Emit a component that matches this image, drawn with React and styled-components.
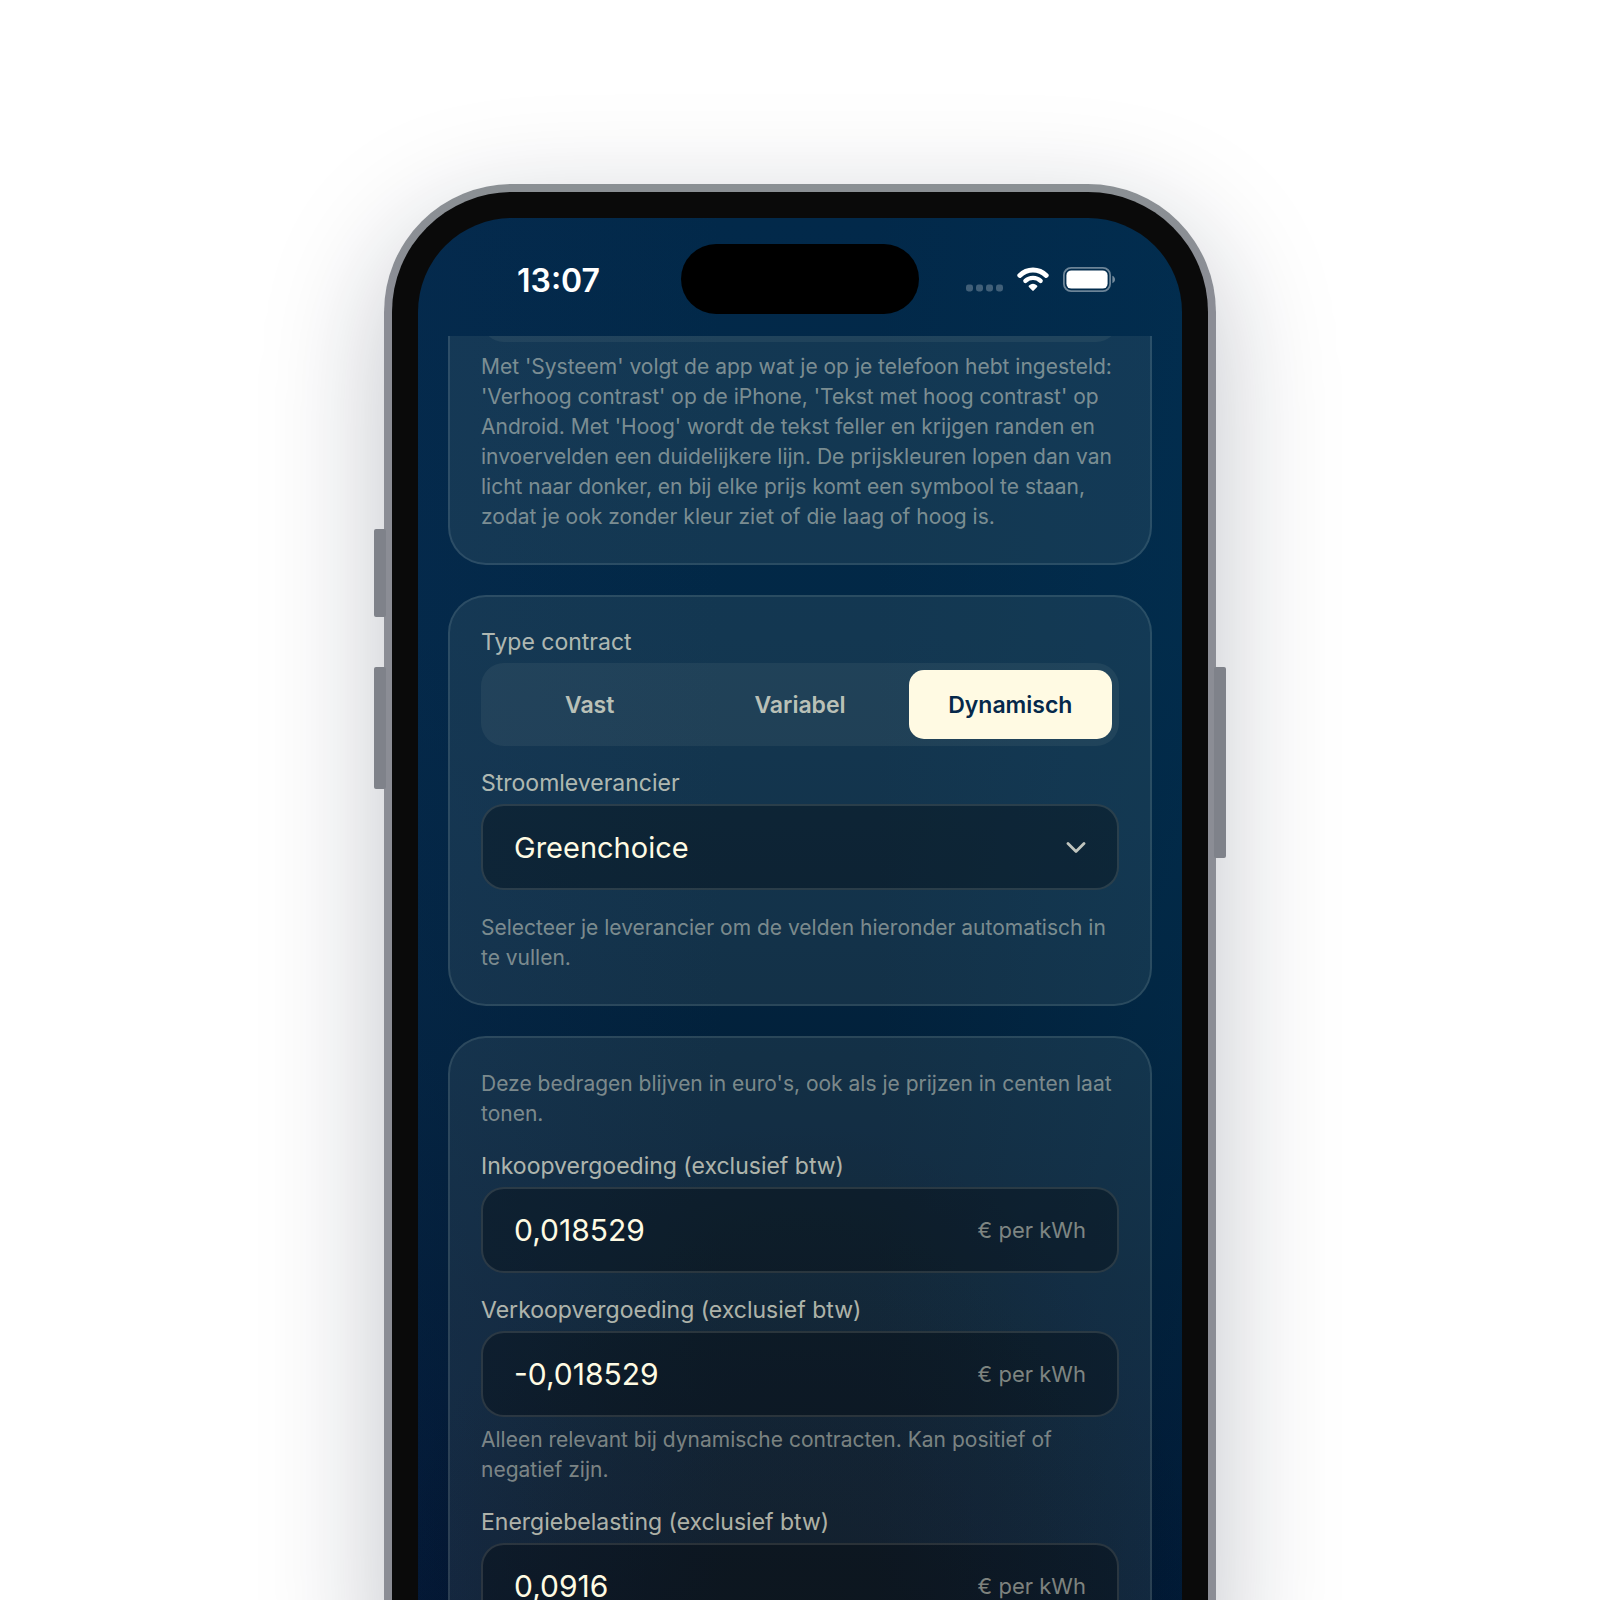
import { useState } from 'react';
import styled, { createGlobalStyle } from 'styled-components';

const contractTypes = ['Vast', 'Variabel', 'Dynamisch'];

export default function App() {
  const [contract, setContract] = useState('Dynamisch');

  return (
    <Page>
      <GlobalStyle />
      <Phone>
        <SideButton $side="left" $top={345} $height={88} />
        <SideButton $side="left" $top={483} $height={122} />
        <SideButton $side="right" $top={483} $height={191} />
        <Bezel>
          <Screen>
            <StatusBar />
            <Settings>
              <Card $clipped>
                <SegmentTail />
                <Hint>
                  Met 'Systeem' volgt de app wat je op je telefoon hebt ingesteld: 'Verhoog contrast' op de iPhone,
                  'Tekst met hoog contrast' op Android. Met 'Hoog' wordt de tekst feller en krijgen randen en
                  invoervelden een duidelijkere lijn. De prijskleuren lopen dan van licht naar donker, en bij elke
                  prijs komt een symbool te staan, zodat je ook zonder kleur ziet of die laag of hoog is.
                </Hint>
              </Card>

              <Card>
                <Field>
                  <Label as="span" id="contract-label">
                    Type contract
                  </Label>
                  <Segments role="group" aria-labelledby="contract-label">
                    {contractTypes.map((type) => (
                      <Segment
                        key={type}
                        type="button"
                        $active={type === contract}
                        aria-pressed={type === contract}
                        onClick={() => setContract(type)}
                      >
                        {type}
                      </Segment>
                    ))}
                  </Segments>
                </Field>
                <Field>
                  <Label htmlFor="supplier">Stroomleverancier</Label>
                  <Control>
                    <Select id="supplier" defaultValue="Greenchoice">
                      <option>Greenchoice</option>
                    </Select>
                    <Chevron />
                  </Control>
                </Field>
                <Hint>Selecteer je leverancier om de velden hieronder automatisch in te vullen.</Hint>
              </Card>

              <Card>
                <Hint>Deze bedragen blijven in euro's, ook als je prijzen in centen laat tonen.</Hint>
                <PriceField id="purchase" label="Inkoopvergoeding (exclusief btw)" value="0,018529" />
                <PriceField
                  id="sale"
                  label="Verkoopvergoeding (exclusief btw)"
                  value="-0,018529"
                  hint="Alleen relevant bij dynamische contracten. Kan positief of negatief zijn."
                />
                <PriceField id="tax" label="Energiebelasting (exclusief btw)" value="0,0916" />
              </Card>
            </Settings>
          </Screen>
        </Bezel>
      </Phone>
    </Page>
  );
}

function PriceField({ id, label, value, hint }) {
  return (
    <Field>
      <Label htmlFor={id}>{label}</Label>
      <Control>
        <Input id={id} type="text" inputMode="decimal" defaultValue={value} />
        <Unit>€ per kWh</Unit>
      </Control>
      {hint && <Hint>{hint}</Hint>}
    </Field>
  );
}

function StatusBar() {
  return (
    <Bar>
      <Time>13:07</Time>
      <Island />
      <Indicators>
        <svg width="37" height="25" viewBox="0 0 37 25" fill="#fff" fillOpacity="0.25">
          <rect x="0" y="17.5" width="7" height="7" rx="2.4" />
          <rect x="10" y="17.5" width="7" height="7" rx="2.4" />
          <rect x="20" y="17.5" width="7" height="7" rx="2.4" />
          <rect x="30" y="17.5" width="7" height="7" rx="2.4" />
        </svg>
        <svg width="32" height="25" viewBox="0 0 32 25" fill="none" stroke="#fff" strokeLinecap="round">
          <path d="M2.8 8.4A18.8 18.8 0 0 1 29.2 8.4" strokeWidth="4.9" />
          <path d="M8.4 13.9A11 11 0 0 1 23.6 13.9" strokeWidth="4.4" />
          <path
            d="M12.6 19.2Q16 16.6 19.4 19.2L16 22.8Z"
            fill="#fff"
            strokeWidth="2"
            strokeLinejoin="round"
          />
        </svg>
        <svg width="52" height="25" viewBox="0 0 52 25">
          <rect x="0.9" y="0.9" width="46.2" height="23.2" rx="7.2" fill="none" stroke="#fff" strokeOpacity="0.42" strokeWidth="1.8" />
          <rect x="3.4" y="3.4" width="41.2" height="18.2" rx="5" fill="#fff" />
          <path d="M49.4 8.8C50.9 9.4 52 10.8 52 12.5S50.9 15.6 49.4 16.2Z" fill="#fff" fillOpacity="0.45" />
        </svg>
      </Indicators>
    </Bar>
  );
}

function Chevron() {
  return (
    <svg width="20" height="12" viewBox="0 0 20 12" fill="none" aria-hidden="true">
      <path d="M2 2.4L10 10.4L18 2.4" stroke="#c0c5be" strokeWidth="2.8" strokeLinecap="round" strokeLinejoin="round" />
    </svg>
  );
}

const GlobalStyle = createGlobalStyle`
  * {
    box-sizing: border-box;
  }

  body {
    margin: 0;
    background: #fff;
    font-family: Inter, 'Liberation Sans', sans-serif;
  }

  button,
  input,
  select {
    font-family: inherit;
  }
`;

const Page = styled.main`
  display: flex;
  justify-content: center;
  align-items: flex-start;
  height: 100vh;
  padding: 184px 16px 0;
  overflow: hidden;
`;

const Phone = styled.div`
  position: relative;
  width: 100%;
  max-width: 832px;
  padding: 8px;
  border-radius: 128px;
  background: linear-gradient(#8b9094, #8b8d95 120px);
  box-shadow: 0 36px 120px rgba(15, 25, 45, 0.26);
`;

const SideButton = styled.span`
  position: absolute;
  ${(props) => props.$side}: -10px;
  top: ${(props) => props.$top}px;
  width: 12px;
  height: ${(props) => props.$height}px;
  border-radius: 2px;
  background: #7f828a;
`;

const Bezel = styled.div`
  padding: 26px;
  border-radius: 120px;
  background: #0a0a0a;
`;

const Screen = styled.div`
  border-radius: 94px;
  overflow: hidden;
  background: radial-gradient(ellipse 420px 600px at 50% 1500px, rgba(3, 16, 22, 0.6), transparent),
    linear-gradient(90deg, rgba(10, 44, 84, 0.3), transparent 40%, transparent 60%, rgba(0, 56, 92, 0.25)),
    linear-gradient(#02294a, #022846 420px, #02213b 840px, #021a32 1060px, #01102a 1400px);
`;

const Bar = styled.div`
  display: grid;
  grid-template-columns: 1fr 238px 1fr;
  align-items: center;
  padding: 26px 0 22px;
`;

const Time = styled.div`
  padding: 3px 0 0 18px;
  font-size: 32px;
  font-weight: 600;
  line-height: 40px;
  text-align: center;
  color: #fff;
`;

const Island = styled.div`
  height: 70px;
  border-radius: 35px;
  background: #000;
`;

const Indicators = styled.div`
  display: flex;
  justify-content: center;
  align-items: center;
  gap: 14px;
  padding-right: 20px;
`;

const Settings = styled.div`
  display: flex;
  flex-direction: column;
  gap: 30px;
  padding: 0 30px 30px;
  overflow: hidden;
`;

const Card = styled.section`
  display: flex;
  flex-direction: column;
  gap: ${(props) => (props.$clipped ? 10 : 23)}px;
  padding: ${(props) => (props.$clipped ? '0 31px 31px' : '31px')};
  border: 2px solid rgba(200, 225, 220, 0.13);
  border-top-width: ${(props) => (props.$clipped ? 0 : 2)}px;
  border-radius: ${(props) => (props.$clipped ? '0 0 38px 38px' : '38px')};
  background: rgba(255, 250, 225, 0.07);
`;

const Field = styled.div`
  display: flex;
  flex-direction: column;
  gap: 6px;
`;

const Label = styled.label`
  font-size: 23px;
  line-height: 29px;
  color: rgba(255, 251, 227, 0.68);
`;

const Hint = styled.p`
  margin: 0;
  font-size: 21px;
  line-height: 30px;
  color: rgba(255, 251, 227, 0.45);

  ${Field} > & {
    padding-top: 2px;
  }
`;

const Segments = styled.div`
  display: grid;
  grid-template-columns: repeat(3, 1fr);
  gap: 7px;
  padding: 7px;
  border-radius: 23px;
  background: rgba(255, 250, 225, 0.06);
`;

// Lower edge of the control that is scrolled out under the status bar
const SegmentTail = styled.div`
  height: 83px;
  margin-top: -77px;
  border-radius: 23px;
  background: rgba(255, 250, 225, 0.06);
`;

const Segment = styled.button`
  height: 69px;
  padding: 0;
  border: none;
  border-radius: 15px;
  background: ${(props) => (props.$active ? '#fffae3' : 'transparent')};
  font-size: 23px;
  font-weight: 600;
  color: ${(props) => (props.$active ? '#06284a' : 'rgba(255, 251, 227, 0.7)')};
  cursor: pointer;
`;

const Control = styled.div`
  display: flex;
  align-items: center;
  height: 86px;
  padding: 0 31px;
  border: 2px solid rgba(255, 250, 225, 0.12);
  border-radius: 23px;
  background: rgba(0, 0, 0, 0.3);
`;

const Input = styled.input`
  flex: 1;
  min-width: 0;
  height: 100%;
  padding: 0;
  border: none;
  outline: none;
  background: transparent;
  font-size: 30px;
  color: #fffbe3;
`;

const Select = styled.select`
  flex: 1;
  min-width: 0;
  height: 100%;
  padding: 0;
  border: none;
  outline: none;
  appearance: none;
  background: transparent;
  font-size: 29px;
  color: #fffbe3;
  cursor: pointer;
`;

const Unit = styled.span`
  font-size: 22px;
  color: rgba(255, 251, 227, 0.47);
`;
